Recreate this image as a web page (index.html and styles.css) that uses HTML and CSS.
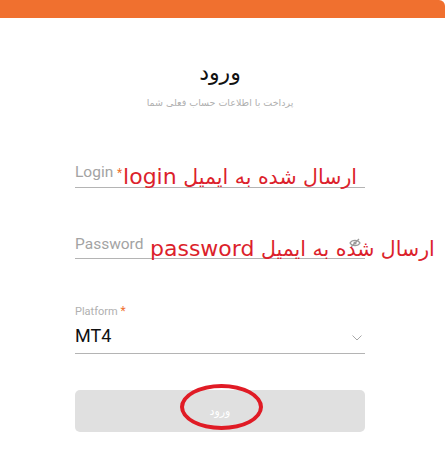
FILE: index.html
```html
<!DOCTYPE html>
<html lang="fa">
<head>
<meta charset="utf-8">
<title>ورود</title>
<link rel="stylesheet" href="styles.css">
</head>
<body>
<div class="topbar"></div>
<main class="login">
  <h1 class="title">ورود</h1>
  <p class="subtitle">پرداخت با اطلاعات حساب فعلی شما</p>
  <form class="form">
    <div class="field">
      <span class="label">Login <span class="req">*</span></span>
      <span class="note note-login">ارسال شده به ایمیل <span class="lat">login</span></span>
    </div>
    <div class="field">
      <span class="label">Password</span>
      <svg class="eye" width="12" height="10" viewBox="0 0 12 10" aria-hidden="true">
        <path d="M1 5 C3 1.5 9 1.5 11 5 C9 8.5 3 8.5 1 5 Z" fill="none" stroke="#9a9a9a" stroke-width="1.3"/>
        <circle cx="6" cy="5" r="1.6" fill="#9a9a9a"/>
        <path d="M2 9 L10 1" stroke="#9a9a9a" stroke-width="1.3"/>
      </svg>
      <span class="note note-pass">ارسال شده به ایمیل <span class="lat">password</span></span>
    </div>
    <div class="field field-select">
      <span class="small-label">Platform <span class="req">*</span></span>
      <div class="select-row">
        <span class="value">MT4</span>
        <svg class="chevron" width="10" height="6" viewBox="0 0 10 6" aria-hidden="true">
          <path d="M0.5 0.5 L5 5 L9.5 0.5" fill="none" stroke="#a8a8a8" stroke-width="1"/>
        </svg>
      </div>
    </div>
    <button type="button" class="submit">ورود</button>
    <span class="circle"></span>
  </form>
</main>
</body>
</html>
```
FILE: styles.css
```css
html, body {
  margin: 0;
  padding: 0;
  overflow: hidden;
  background: #ffffff;
}
body {
  font-family: Roboto, "DejaVu Sans", sans-serif;
  width: 445px;
  height: 470px;
}
.topbar {
  height: 18px;
  background: #f0702f;
  border-top-right-radius: 6px;
}
.login {
  width: 290px;
  margin: 0 0 0 75px;
  display: flex;
  flex-direction: column;
}
.title {
  margin: 40px 0 0 0;
  font-family: "DejaVu Sans", sans-serif;
  font-weight: normal;
  font-size: 22px;
  line-height: 30px;
  color: #111;
  text-align: center;
}
.subtitle {
  margin: 8px 0 0 0;
  font-family: "DejaVu Sans", sans-serif;
  font-size: 9.5px;
  line-height: 14px;
  color: #b0b0b0;
  text-align: center;
}
.form {
  position: relative;
  display: flex;
  flex-direction: column;
  gap: 45px;
  margin-top: 51px;
}
.field {
  position: relative;
  border-bottom: 1px solid #b4b4b4;
  padding-bottom: 5px;
  display: flex;
  align-items: center;
}
.label {
  font-size: 15.5px;
  line-height: 20px;
  padding-top: 1px;
  margin-bottom: -1px;
  color: #a3a3a3;
}
.req {
  color: #f0702f;
  font-size: 12px;
}
.note {
  position: absolute;
  top: 1px;
  font-family: "DejaVu Sans", sans-serif;
  font-size: 20.5px;
  line-height: 30px;
  color: #dc1f2c;
  direction: rtl;
  white-space: nowrap;
}
.note .lat {
  font-size: 22px;
}
.note-login {
  right: 8px;
}
.note-pass {
  left: 75px;
}
.eye {
  position: absolute;
  right: 4px;
  top: 5px;
}
.field-select {
  flex-direction: column;
  align-items: stretch;
}
.small-label {
  font-size: 11px;
  line-height: 14px;
  color: #b0b0b0;
}
.select-row {
  display: flex;
  align-items: center;
  justify-content: space-between;
  margin-top: 5px;
  height: 24px;
}
.value {
  font-size: 18px;
  line-height: 24px;
  color: #111;
}
.chevron {
  margin-right: 3px;
  margin-top: 4px;
}
.submit {
  margin-top: -9px;
  height: 42px;
  border: none;
  border-radius: 5px;
  background: #e0e0e0;
  color: #ffffff;
  font-family: "DejaVu Sans", sans-serif;
  font-size: 11px;
  padding: 0;
}
.circle {
  position: absolute;
  left: 105px;
  bottom: 2px;
  width: 75px;
  height: 38px;
  border: 4px solid #e01b25;
  border-radius: 50%;
}
```
